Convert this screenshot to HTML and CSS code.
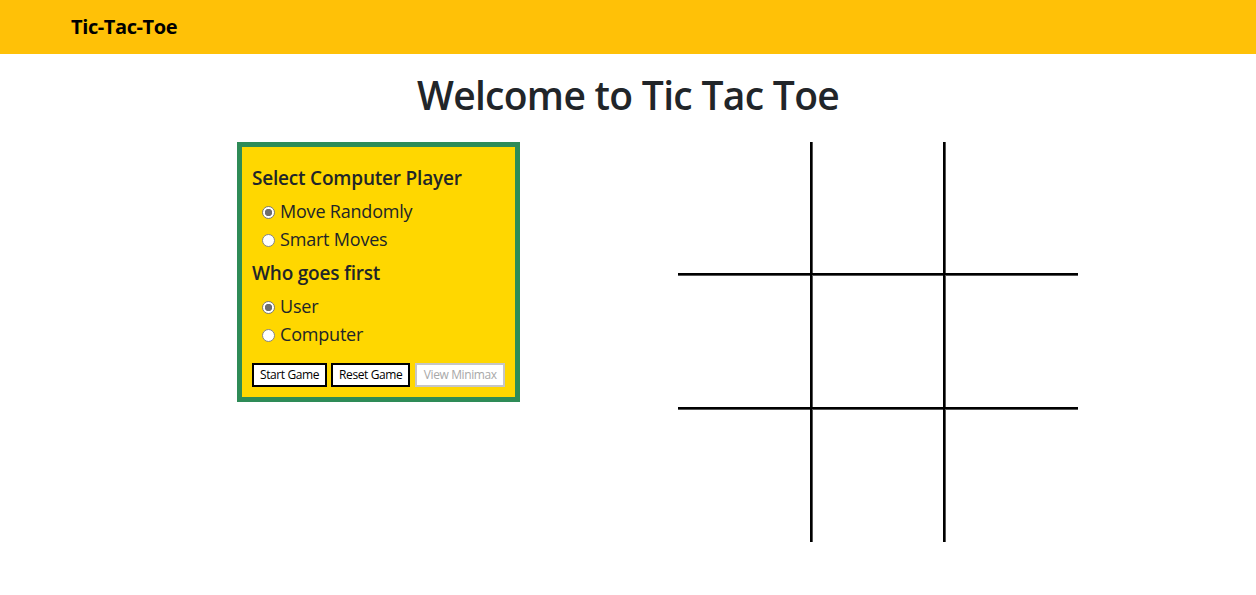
FILE: index.html
```html
<!DOCTYPE html>
<html lang="en">
<head>
<meta charset="utf-8">
<title>Tic-Tac-Toe</title>
<link rel="stylesheet" href="styles.css">
</head>
<body>
<nav class="navbar">
  <a class="brand" href="#">Tic-Tac-Toe</a>
</nav>
<main class="page">
  <h1 class="title">Welcome to Tic Tac Toe</h1>
  <div class="game">
    <section class="panel">
      <h3 class="panel-heading">Select Computer Player</h3>
      <div class="options">
        <label class="option"><input type="radio" name="mode" checked>Move Randomly</label>
        <label class="option"><input type="radio" name="mode">Smart Moves</label>
      </div>
      <h3 class="panel-heading">Who goes first</h3>
      <div class="options">
        <label class="option"><input type="radio" name="first" checked>User</label>
        <label class="option"><input type="radio" name="first">Computer</label>
      </div>
      <div class="actions">
        <button class="btn">Start Game</button>
        <button class="btn">Reset Game</button>
        <button class="btn" disabled>View Minimax</button>
      </div>
    </section>
    <div class="board">
      <div class="cell"></div>
      <div class="cell col"></div>
      <div class="cell col"></div>
      <div class="cell row"></div>
      <div class="cell row col"></div>
      <div class="cell row col"></div>
      <div class="cell row"></div>
      <div class="cell row col"></div>
      <div class="cell row col"></div>
    </div>
  </div>
</main>
</body>
</html>
```
FILE: styles.css
```css
* { box-sizing: border-box; }

body {
  margin: 0;
  font-family: "Open Sans", "Noto Sans", sans-serif;
  color: #212529;
  background: #fff;
}

.navbar {
  height: 54px;
  background: #ffc107;
  padding: 12px 0 0 71px;
}

.brand {
  font-size: 20px;
  font-weight: 700;
  line-height: 30px;
  letter-spacing: -0.4px;
  color: #000;
  text-decoration: none;
}

.title {
  margin: 17px 0 0;
  font-size: 39px;
  font-weight: 600;
  line-height: 48px;
  letter-spacing: -0.7px;
  text-align: center;
  color: #212529;
}

.game {
  display: grid;
  grid-template-columns: 283px 400px;
  column-gap: 158px;
  align-items: start;
  margin: 23px 0 0 237px;
}

.panel {
  background: #ffd700;
  border: 5px solid #2e8b57;
  padding: 19px 10px 10px 10px;
}

.panel-heading {
  margin: 0 0 8px;
  font-size: 19px;
  font-weight: 600;
  line-height: 24px;
  letter-spacing: -0.2px;
}

.options {
  margin-bottom: 8px;
  padding-left: 10px;
}

.option {
  display: block;
  font-size: 18px;
  line-height: 27.5px;
  letter-spacing: -0.2px;
  color: #212529;
}

.option input {
  appearance: none;
  -webkit-appearance: none;
  width: 13px;
  height: 13px;
  margin: 0 5px 0 0;
  border: 1px solid #858585;
  border-radius: 50%;
  background: #fff;
  vertical-align: -1px;
}

.option input:checked {
  background: radial-gradient(circle, #6e6e6e 0 3.4px, #fff 4px);
  border-color: #7a7a7a;
}

.actions {
  display: flex;
  gap: 4px;
  margin-top: 15px;
}

.btn {
  flex: none;
  white-space: nowrap;
  height: 23.5px;
  padding: 0 6px;
  border: 2px solid #000;
  background: #fff;
  color: #000;
  font-family: "Open Sans", "Noto Sans", sans-serif;
  font-size: 12px;
  line-height: 19.5px;
  letter-spacing: -0.4px;
  border-radius: 0;
}

.btn:disabled {
  border-color: #c6c6c6;
  color: #a8a8a8;
  margin-left: 1px;
  padding: 0 6.5px;
}

.board {
  display: grid;
  grid-template-columns: 132px 131px 133px;
  grid-template-rows: 131px 132px 133px;
  gap: 2px;
  width: 400px;
  height: 400px;
  background: #000;
}

.cell {
  background: #fff;
}

.cell.col { box-shadow: inset 1px 0 0 #555; }
.cell.row { box-shadow: inset 0 1px 0 #555; }
.cell.row.col { box-shadow: inset 1px 1px 0 #555; }
```
